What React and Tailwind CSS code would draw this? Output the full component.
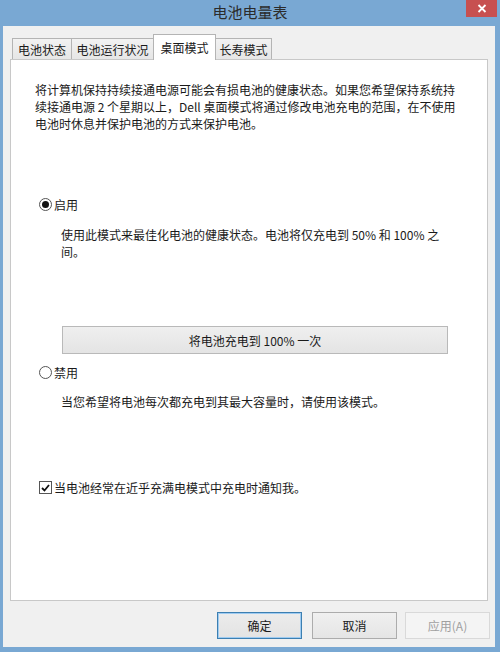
import { useState } from "react";

const font = "font-['Noto_Sans_CJK_SC','Liberation_Sans',sans-serif]";

const Tab = ({ label, active, width }) =>
  active ? (
    <div className={`relative z-10 -mb-px flex h-[26px] items-start justify-center border border-b-0 border-[#b4b4b4] bg-white pt-[4px] text-[12px] leading-[17px] text-[#1a1a1a] ${width}`}>
      {label}
    </div>
  ) : (
    <div className={`-ml-px flex h-[21px] items-center justify-center border border-b-0 border-[#b4b4b4] bg-gradient-to-b from-[#f2f2f2] to-[#e6e6e6] text-[12px] leading-[17px] text-[#1a1a1a] first:ml-0 ${width}`}>
      {label}
    </div>
  );

const Radio = ({ checked, label, onClick }) => (
  <button onClick={onClick} className="flex h-[17px] items-center gap-[2px] text-left">
    <span className="flex h-[13px] w-[13px] items-center justify-center rounded-full border border-[#555] bg-white">
      {checked && <span className="h-[7px] w-[7px] rounded-full bg-[#111]" />}
    </span>
    <span className="text-[12px] leading-[17px] text-[#1a1a1a]">{label}</span>
  </button>
);

const DialogButton = ({ children, primary, disabled, className = "" }) => (
  <button
    disabled={disabled}
    className={`flex h-[27px] w-[85px] items-center justify-center border text-[12px] leading-[17px] ${
      primary
        ? "border-[#3c7fb1] bg-gradient-to-b from-[#ececec] to-[#e3e3e3] text-[#1a1a1a] shadow-[inset_0_0_0_1px_#9ecbf1]"
        : disabled
        ? "border-[#d9d9d9] bg-[#f4f4f4] text-[#a0a0a0]"
        : "border-[#acacac] bg-gradient-to-b from-[#f0f0f0] to-[#e5e5e5] text-[#1a1a1a]"
    } ${className}`}
  >
    {children}
  </button>
);

export default function App() {
  const [mode, setMode] = useState("on");
  const [notify, setNotify] = useState(true);

  return (
    <div className={`flex h-[652px] w-[500px] flex-col bg-[#79a8d3] ${font}`}>
      {/* title bar */}
      <div className="relative flex h-[26px] items-center justify-center">
        <span className="pb-[2px] text-[15px] leading-[20px] text-[#2b2b2b]">电池电量表</span>
        <button className="absolute right-[3px] top-0 flex h-[17px] w-[31px] items-center justify-center bg-[#c75050]">
          <svg width="10" height="9" viewBox="0 0 10 9">
            <path d="M1.5 1 L8.5 8 M8.5 1 L1.5 8" stroke="white" strokeWidth="1.8" />
          </svg>
        </button>
      </div>

      {/* client area */}
      <div className="mb-[5px] ml-[3px] mr-[5px] flex flex-1 flex-col bg-[#f0f0f0]">
        <div className="ml-[9px] mt-[8px] flex items-end">
          <Tab label="电池状态" width="w-[60px]" />
          <Tab label="电池运行状况" width="w-[83px]" />
          <Tab label="桌面模式" active width="w-[63px] -ml-px" />
          <Tab label="长寿模式" width="w-[57px]" />
        </div>

        <div className="mx-[7px] flex h-[542px] flex-col border border-[#c8c8c8] bg-white pl-[24px] pt-[21px] text-[12px] leading-[17px] text-[#1a1a1a]">
          <p>
            将计算机保持持续接通电源可能会有损电池的健康状态。如果您希望保持系统持
            <br />
            续接通电源 2 个星期以上，Dell 桌面模式将通过修改电池充电的范围，在不使用
            <br />
            电池时休息并保护电池的方式来保护电池。
          </p>

          <div className="ml-[4px] mt-[64px]">
            <Radio label="启用" checked={mode === "on"} onClick={() => setMode("on")} />
          </div>
          <p className="ml-[26px] mt-[13px]">
            使用此模式来最佳化电池的健康状态。电池将仅充电到 50% 和 100% 之
            <br />
            间。
          </p>

          <button className="ml-[27px] mt-[66px] flex h-[28px] w-[386px] items-center justify-center border border-[#b9b9b9] bg-gradient-to-b from-[#efefef] to-[#e4e4e4] text-[12px] leading-[17px] text-[#1a1a1a]">
            将电池充电到 100% 一次
          </button>

          <div className="ml-[4px] mt-[10px]">
            <Radio label="禁用" checked={mode === "off"} onClick={() => setMode("off")} />
          </div>
          <p className="ml-[26px] mt-[12px]">当您希望将电池每次都充电到其最大容量时，请使用该模式。</p>

          <button
            onClick={() => setNotify(!notify)}
            className="ml-[4px] mt-[69px] flex h-[17px] items-center gap-[2px] text-left"
          >
            <span className="flex h-[13px] w-[13px] items-center justify-center border border-[#555] bg-white">
              {notify && (
                <svg width="9" height="8" viewBox="0 0 9 8">
                  <path d="M1 4 L3.5 6.5 L8 1" fill="none" stroke="#111" strokeWidth="1.8" />
                </svg>
              )}
            </span>
            <span className="text-[12px] leading-[17px]">当电池经常在近乎充满电模式中充电时通知我。</span>
          </button>
        </div>

        <div className="mr-[5px] mt-[11px] flex justify-end">
          <DialogButton primary>确定</DialogButton>
          <DialogButton className="ml-[10px]">取消</DialogButton>
          <DialogButton disabled className="ml-[8px]">应用(A)</DialogButton>
        </div>
      </div>
    </div>
  );
}
